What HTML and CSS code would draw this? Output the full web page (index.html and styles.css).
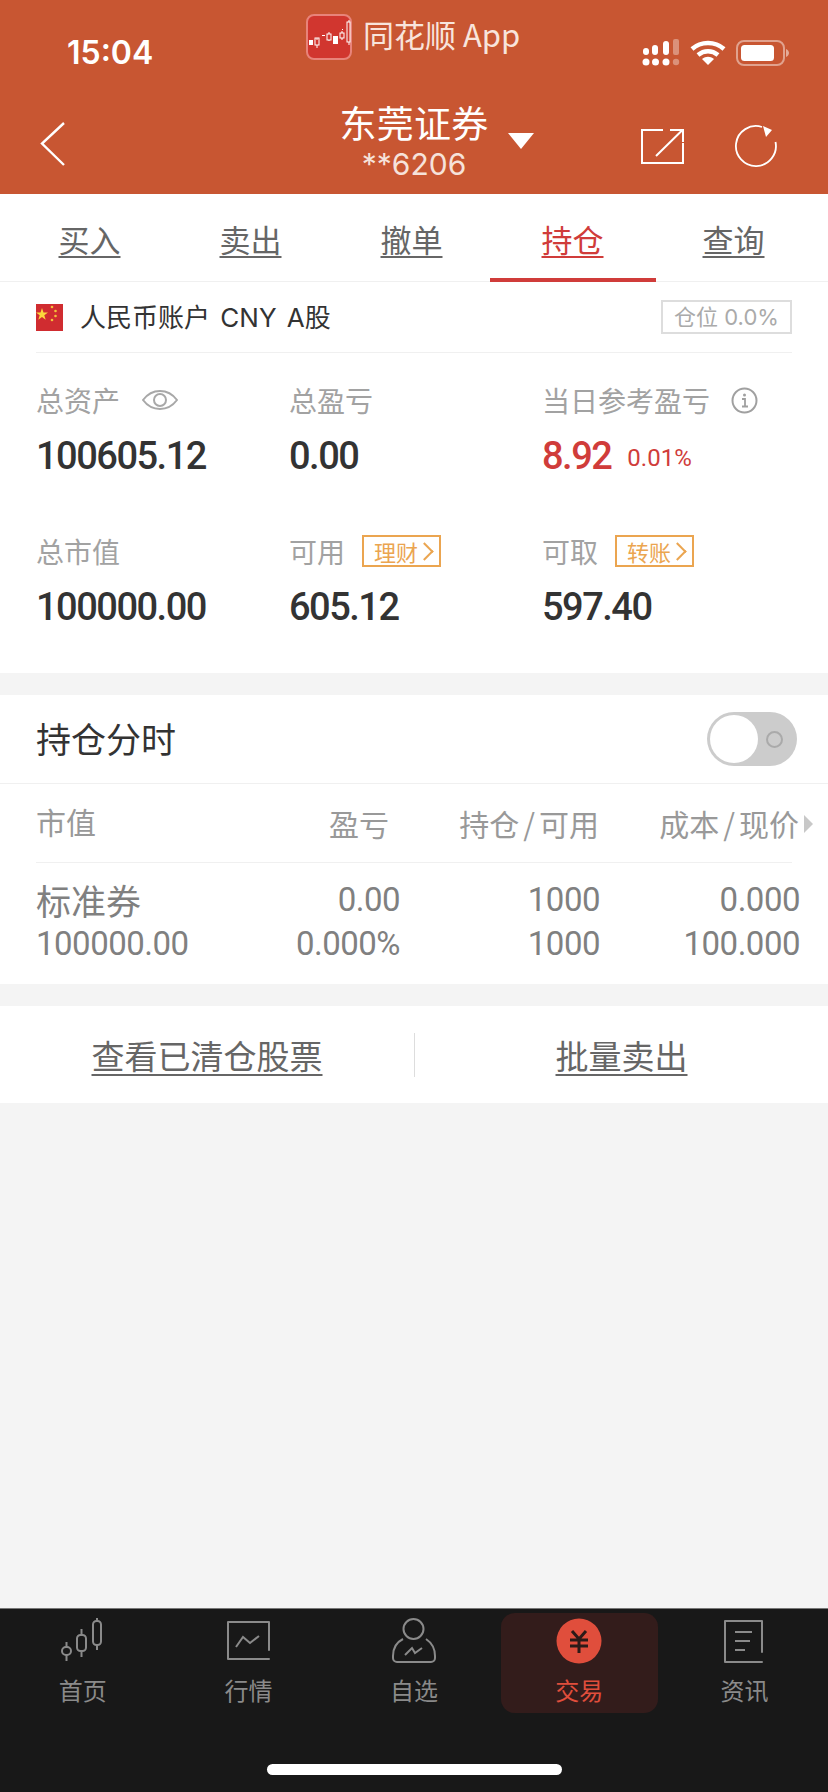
FILE: index.html
```html
<!DOCTYPE html>
<html lang="zh">
<head>
<meta charset="UTF-8">
<title>持仓</title>
<link rel="stylesheet" href="styles.css">
</head>
<body>
<div class="phone">
  <header class="top">
    <div class="status">
      <span class="time">15:04</span>
      <div class="source">
        <svg class="app-logo" width="46" height="46" viewBox="0 0 46 46">
          <rect x="1" y="1" width="44" height="44" rx="7" fill="#d1362f" stroke="#e8837a" stroke-width="2"/>
          <g fill="none" stroke="#fff" stroke-width="1">
            <path d="M4 27h1M11 26v-2M11 31v3M23 20v-2M23 26v1M36 19v-2M36 24v2M43 8v-2M43 28v3"/>
            <rect x="9" y="24" width="4" height="7"/>
            <rect x="21" y="20" width="4" height="6"/>
            <rect x="34" y="19" width="4" height="5"/>
            <rect x="41" y="8" width="3" height="20"/>
          </g>
          <g fill="#fff">
            <rect x="3" y="26" width="4" height="5"/>
            <rect x="16" y="21" width="3" height="1"/>
            <rect x="27" y="22" width="5" height="8"/>
            <rect x="36" y="15" width="1" height="1"/>
          </g>
        </svg>
        <span class="source-name">同花顺 App</span>
      </div>
      <div class="indicators">
        <svg width="38" height="27" viewBox="0 0 38 27">
          <g fill="#fff">
            <rect x="1" y="9" width="6" height="7" rx="3"/>
            <rect x="10" y="6" width="6" height="10" rx="3"/>
            <rect x="21" y="2" width="6" height="14" rx="3"/>
            <circle cx="4" cy="23" r="3.5"/>
            <circle cx="13.500" cy="23" r="3.5"/>
            <circle cx="24" cy="23" r="3.5"/>
          </g>
          <g fill="#fff" opacity=".35">
            <rect x="31" y="0" width="6" height="16" rx="2"/>
            <circle cx="34" cy="23" r="3.2"/>
          </g>
        </svg>
        <svg width="36" height="26" viewBox="0 0 36 26">
          <path d="M2 9C11 1 25 1 34 9M8 15c6-5 14-5 20 0" fill="none" stroke="#fff" stroke-width="4.4"/>
          <path d="M12 19c4-3 8-3 12 0l-6 6z" fill="#fff"/>
        </svg>
        <svg width="54" height="26" viewBox="0 0 54 26">
          <rect x="1" y="1" width="47" height="24" rx="7" fill="none" stroke="#fff" stroke-opacity=".45" stroke-width="2"/>
          <rect x="5" y="5" width="33" height="16" rx="3.5" fill="#fff"/>
          <path d="M50 9c2 1 3 2.500 3 4s-1 3-3 4z" fill="#fff" fill-opacity=".5"/>
        </svg>
      </div>
    </div>
    <div class="navbar">
      <svg class="back" width="26" height="46" viewBox="0 0 26 46">
        <path d="M24 2L2 22.500 24 44" fill="none" stroke="#fff" stroke-width="2.400"/>
      </svg>
      <div class="broker">
        <div class="broker-name">东莞证券</div>
        <div class="broker-acct">**6206</div>
      </div>
      <svg class="caret" width="26" height="18" viewBox="0 0 26 18">
        <path d="M0 1h26L13 17z" fill="#fff"/>
      </svg>
      <svg class="open" width="43" height="35" viewBox="0 0 43 35">
        <path d="M22 1H1v33h41V14M15 27L41 1.500M29 1h13v12" fill="none" stroke="#fff" stroke-width="2"/>
      </svg>
      <svg class="refresh" width="44" height="44" viewBox="0 0 44 44">
        <path d="M28 3A20 20 0 1 0 41.500 18" fill="none" stroke="#fff" stroke-width="1.800"/>
        <path d="M29 2l9 4-6 7z" fill="#fff"/>
      </svg>
    </div>
  </header>

  <nav class="tabs">
    <a class="tab">买入</a>
    <a class="tab">卖出</a>
    <a class="tab">撤单</a>
    <a class="tab on">持仓</a>
    <a class="tab">查询</a>
  </nav>

  <section class="assets">
    <div class="acct-row">
      <svg width="27" height="27" viewBox="0 0 27 27">
        <rect width="27" height="27" fill="#d02c30"/>
        <path d="M6 4l1.500 4.500h4.500l-3.700 2.800 1.400 4.500L6 13l-3.700 2.800 1.400-4.500L0 8.500h4.500z" fill="#fbd83c"/>
        <g fill="#f3c23a">
          <circle cx="16" cy="3" r="1.300"/>
          <circle cx="19.500" cy="7" r="1.300"/>
          <circle cx="19.500" cy="12" r="1.300"/>
          <circle cx="16" cy="16" r="1.300"/>
        </g>
      </svg>
      <span class="acct-name">人民币账户 CNY A股</span>
      <span class="position">仓位 0.0%</span>
    </div>
    <div class="stats">
      <div class="stat">
        <div class="stat-label">总资产
          <svg class="eye" width="36" height="24" viewBox="0 0 36 24">
            <path d="M1 12C10 0 26 0 35 12 26 24 10 24 1 12z" fill="none" stroke="#a8a8a8" stroke-width="2"/>
            <circle cx="18" cy="12" r="6" fill="none" stroke="#a8a8a8" stroke-width="2"/>
          </svg>
        </div>
        <div class="stat-num">100605.12</div>
      </div>
      <div class="stat">
        <div class="stat-label">总盈亏</div>
        <div class="stat-num">0.00</div>
      </div>
      <div class="stat">
        <div class="stat-label">当日参考盈亏
          <svg class="info" width="27" height="27" viewBox="0 0 27 27">
            <circle cx="13.500" cy="13.500" r="12" fill="none" stroke="#a0a0a0" stroke-width="2"/>
            <path d="M11 12h3v7M11 19.500h6" fill="none" stroke="#a0a0a0" stroke-width="1.800"/>
            <circle cx="13.500" cy="8" r="1.500" fill="#a0a0a0"/>
          </svg>
        </div>
        <div class="stat-num red">8.92<small>0.01%</small></div>
      </div>
      <div class="stat">
        <div class="stat-label">总市值</div>
        <div class="stat-num">100000.00</div>
      </div>
      <div class="stat">
        <div class="stat-label">可用<span class="tag">理财<i class="chev"></i></span></div>
        <div class="stat-num">605.12</div>
      </div>
      <div class="stat">
        <div class="stat-label">可取<span class="tag">转账<i class="chev"></i></span></div>
        <div class="stat-num">597.40</div>
      </div>
    </div>
  </section>

  <section class="holdings">
    <div class="hold-head">
      <span>持仓分时</span>
      <div class="switch"><div class="knob"></div><div class="ring"></div></div>
    </div>
    <div class="hold-cols">
      <span>市值</span>
      <span>盈亏</span>
      <span>持仓<em>/</em>可用</span>
      <span>成本<em>/</em>现价</span>
      <i class="more"></i>
    </div>
    <div class="hold-row">
      <div class="c1"><div class="stock">标准券</div><div>100000.00</div></div>
      <div class="c2"><div>0.00</div><div>0.000%</div></div>
      <div class="c3"><div>1000</div><div>1000</div></div>
      <div class="c4"><div>0.000</div><div>100.000</div></div>
    </div>
  </section>

  <section class="actions">
    <a>查看已清仓股票</a>
    <b class="sep"></b>
    <a>批量卖出</a>
  </section>

  <main class="blank"></main>

  <footer class="tabbar">
    <div class="items">
      <div class="item">
        <svg width="46" height="46" viewBox="0 0 46 46">
          <g fill="none" stroke="#8a8a8a" stroke-width="2">
            <rect x="2" y="29" width="9" height="8" rx="4"/>
            <path d="M6.500 24v5M6.500 37v6"/>
            <rect x="17" y="17" width="9" height="16" rx="3.500"/>
            <path d="M21.500 11v6M21.500 33v6"/>
            <rect x="33" y="3" width="8" height="24" rx="3.500"/>
            <path d="M37 0v3M37 27v5"/>
          </g>
        </svg>
        <span>首页</span>
      </div>
      <div class="item">
        <svg width="46" height="46" viewBox="0 0 46 46">
          <path d="M44 32V4H3v37h41" fill="none" stroke="#8a8a8a" stroke-width="2" stroke-linejoin="round" stroke-linecap="round"/>
          <path d="M11 29l7-10 7 6 9-7" fill="none" stroke="#8a8a8a" stroke-width="2"/>
        </svg>
        <span>行情</span>
      </div>
      <div class="item">
        <svg width="46" height="46" viewBox="0 0 46 46">
          <circle cx="22.500" cy="11" r="10" fill="none" stroke="#8a8a8a" stroke-width="2"/>
          <path d="M12 21C6 24 2 30 2 38v2a4 4 0 0 0 4 4h34a4 4 0 0 0 4-4v-2c0-8-3-13-9-17" fill="none" stroke="#8a8a8a" stroke-width="2"/>
          <path d="M14 37l7-7 3 5 7-5" fill="none" stroke="#8a8a8a" stroke-width="2"/>
        </svg>
        <span>自选</span>
      </div>
      <div class="item active">
        <svg width="46" height="46" viewBox="0 0 46 46">
          <circle cx="23" cy="23" r="22.500" fill="#e04e3c"/>
          <path d="M16 13l7 8 7-8M14 22h18M14 28h18M23 21v14" fill="none" stroke="#2b1a18" stroke-width="3"/>
        </svg>
        <span>交易</span>
      </div>
      <div class="item">
        <svg width="46" height="46" viewBox="0 0 46 46">
          <path d="M40 34V3H3v41h37" fill="none" stroke="#8a8a8a" stroke-width="2" stroke-linejoin="round" stroke-linecap="round"/>
          <path d="M13 14h17M13 23h15M13 32h10" fill="none" stroke="#8a8a8a" stroke-width="2"/>
        </svg>
        <span>资讯</span>
      </div>
    </div>
    <div class="home-bar"></div>
  </footer>
</div>
</body>
</html>
```

FILE: styles.css
```css
html, body {
  margin: 0;
  padding: 0;
}
body {
  font-family: "Noto Sans CJK SC", "Noto Sans", sans-serif;
  background: #f4f4f4;
}
.phone {
  width: 828px;
  height: 1792px;
  display: flex;
  flex-direction: column;
  overflow: hidden;
}

/* top orange bar */
.top {
  background: #c85632;
  height: 194px;
  color: #fff;
  flex: none;
}
.status {
  height: 92px;
  padding: 11px 36px 0 67px;
  box-sizing: border-box;
  display: flex;
  align-items: flex-start;
}
.time {
  font-family: Inter, "Liberation Sans", sans-serif;
  font-size: 32px;
  font-weight: 600;
  line-height: 36px;
  margin-top: 24px;
  width: 239px;
  flex: none;
}
.source {
  display: flex;
  align-items: center;
  gap: 11px;
  width: 344px;
  flex: none;
  color: #f8e4dc;
}
.source-name {
  font-size: 31px;
  line-height: 46px;
  white-space: nowrap;
  margin-bottom: 6px;
}
.indicators {
  display: flex;
  align-items: center;
  gap: 10px;
  margin-top: 28px;
  margin-left: -8px;
}
.navbar {
  height: 102px;
  position: relative;
  display: flex;
  align-items: center;
  padding: 0 0 0 40px;
}
.back {
  margin-top: 2px;
}
.broker {
  position: absolute;
  left: 339px;
  top: 8px;
  width: 150px;
  text-align: center;
}
.broker-name {
  font-size: 37px;
  line-height: 44px;
  letter-spacing: .3px;
}
.broker-acct {
  font-family: Inter, "Liberation Sans", sans-serif;
  font-size: 30px;
  line-height: 32px;
  margin-top: 4px;
  color: #f6e2da;
}
.caret {
  position: absolute;
  left: 508px;
  top: 40px;
}
.open {
  position: absolute;
  left: 641px;
  top: 37px;
}
.refresh {
  position: absolute;
  left: 734px;
  top: 32px;
}

/* tabs */
.tabs {
  flex: none;
  background: #fff;
  height: 88px;
  box-sizing: border-box;
  display: grid;
  grid-template-columns: repeat(5, 161px);
  padding-left: 9px;
  border-bottom: 1px solid #f0f0f0;
}
.tab {
  height: 88px;
  box-sizing: border-box;
  font-size: 31px;
  line-height: 90px;
  text-align: center;
  color: #666;
  text-decoration: underline;
  text-underline-offset: 4px;
  text-decoration-thickness: 2px;
}
.tab.on {
  color: #d03c3a;
  border-bottom: 4px solid #d03c3a;
  margin: 0 -2.5px;
}

/* assets */
.assets {
  flex: none;
  background: #fff;
  height: 391px;
  padding: 0 36px;
}
.acct-row {
  height: 70px;
  display: flex;
  align-items: center;
  border-bottom: 1px solid #f0f0f0;
}
.acct-name {
  font-family: Inter, "Noto Sans CJK SC", sans-serif;
  font-size: 26px;
  color: #333;
  margin: 0 0 4px 17px;
  flex: 1;
  word-spacing: 3px;
}
.position {
  font-family: Inter, "Noto Sans CJK SC", sans-serif;
  font-size: 22px;
  line-height: 30px;
  color: #aaa;
  border: 2px solid #ddd;
  width: 131px;
  box-sizing: border-box;
  text-align: center;
  white-space: nowrap;
}
.stats {
  display: grid;
  grid-template-columns: 253px 253px 1fr;
  grid-auto-rows: 151px;
  padding-top: 28px;
}
.stat-label {
  font-size: 28px;
  line-height: 38px;
  color: #a2a2a2;
  display: flex;
  align-items: center;
  white-space: nowrap;
}
.eye {
  margin-left: 22px;
}
.info {
  margin-left: 21px;
}
.stat-num {
  font-family: "Roboto", "Liberation Sans", sans-serif;
  font-size: 38px;
  font-weight: 500;
  line-height: 50px;
  margin-top: 12px;
  letter-spacing: -1.500px;
  color: #333;
}
.stat-num.red {
  color: #d03c3a;
}
.stat-num small {
  font-size: 24px;
  font-weight: 400;
  letter-spacing: 0;
  margin-left: 16px;
  vertical-align: 3px;
}
.tag {
  border: 2px solid #eba550;
  color: #eba550;
  font-size: 22px;
  line-height: 28px;
  padding: 0 8px 0 10px;
  margin-left: 17px;
  display: inline-flex;
  align-items: center;
}
.chev {
  width: 13px;
  height: 13px;
  box-sizing: border-box;
  border-top: 2px solid #eba550;
  border-right: 2px solid #eba550;
  transform: rotate(45deg);
}

/* holdings */
.holdings {
  flex: none;
  background: #fff;
  margin-top: 22px;
  height: 289px;
  box-sizing: border-box;
}
.hold-head {
  height: 89px;
  box-sizing: border-box;
  padding: 0 31px 4px 36px;
  display: flex;
  align-items: center;
  justify-content: space-between;
  border-bottom: 1px solid #f0f0f0;
  font-size: 35px;
  color: #333;
}
.switch {
  width: 90px;
  height: 54px;
  margin-bottom: -4px;
  border-radius: 27px;
  background: #ccc;
  display: flex;
  align-items: center;
  justify-content: space-between;
  padding: 0 14px 0 0;
  box-sizing: border-box;
}
.knob {
  width: 48px;
  height: 48px;
  margin-left: 3px;
  border-radius: 50%;
  background: #fff;
}
.ring {
  width: 17px;
  height: 17px;
  border-radius: 50%;
  border: 2px solid #aaa;
  box-sizing: border-box;
}
.hold-cols {
  height: 79px;
  box-sizing: border-box;
  margin: 0 36px;
  padding-bottom: 5px;
  border-bottom: 1px solid #f0f0f0;
  position: relative;
  display: grid;
  grid-template-columns: 1fr 1fr 1fr 1fr;
  align-items: center;
  font-size: 30px;
  color: #999;
  white-space: nowrap;
}
.hold-cols em {
  font-style: normal;
  margin: 0 4px;
}
.hold-cols span:nth-child(2) {
  position: absolute;
  right: 403px;
}
.hold-cols span:nth-child(3) {
  position: absolute;
  right: 193px;
}
.hold-cols span:nth-child(4) {
  position: absolute;
  right: -7px;
}
.more {
  position: absolute;
  right: -21px;
  top: 31px;
  border-left: 9px solid #c8c8c8;
  border-top: 9px solid transparent;
  border-bottom: 9px solid transparent;
}
.hold-row {
  display: grid;
  grid-template-columns: 1fr 200px 200px 200px;
  padding: 15px 28px 0 36px;
  font-family: "Roboto", "Liberation Sans", sans-serif;
  font-size: 33px;
  line-height: 44px;
  letter-spacing: -.5px;
  color: #808080;
}
.c2, .c3, .c4 {
  text-align: right;
  white-space: nowrap;
}
.stock {
  font-family: "Noto Sans CJK SC", sans-serif;
  font-size: 35px;
  letter-spacing: 0;
}

/* buttons under the list */
.actions {
  flex: none;
  background: #fff;
  margin-top: 22px;
  height: 97px;
  display: grid;
  grid-template-columns: 414px 1px 1fr;
  align-items: center;
  text-align: center;
  font-size: 33px;
  color: #666;
}
.actions a {
  text-decoration: underline;
  text-underline-offset: 5px;
  text-decoration-thickness: 2px;
}
.sep {
  height: 44px;
  background: #ddd;
}

.blank {
  flex: 1;
}

/* bottom tab bar */
.tabbar {
  flex: none;
  height: 184px;
  background: #181818;
  border-top: 1px solid #777;
  box-sizing: border-box;
  position: relative;
}
.items {
  display: flex;
  padding-left: 0;
  padding-top: 4px;
}
.item {
  width: 165.600px;
  height: 100px;
  display: flex;
  flex-direction: column;
  align-items: center;
  color: #8a8a8a;
  font-size: 24px;
  line-height: 34px;
  padding-top: 5px;
  box-sizing: border-box;
}
.item svg {
  margin-bottom: 9px;
}
.item.active {
  color: #e04e3c;
  background: #331c1b;
  border-radius: 14px;
  width: 157px;
  margin: 0 4px;
}
.home-bar {
  position: absolute;
  left: 267px;
  top: 155px;
  width: 295px;
  height: 11px;
  background: #fff;
  border-radius: 6px;
}
```
